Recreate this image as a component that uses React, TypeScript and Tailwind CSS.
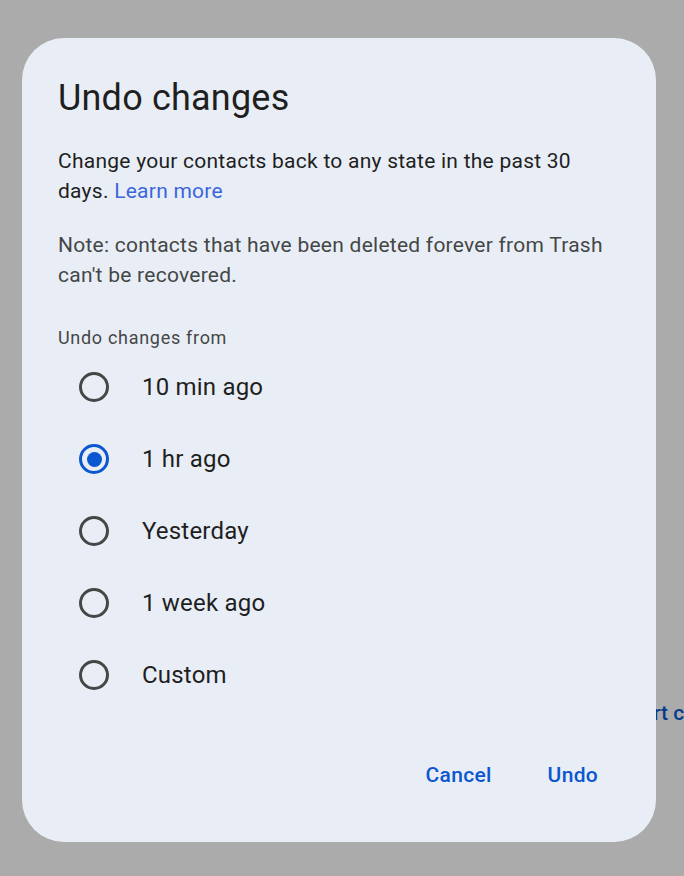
const options = ['10 min ago', '1 hr ago', 'Yesterday', '1 week ago', 'Custom'];

function Radio({ checked }: { checked: boolean }) {
  return (
    <span
      className={
        checked
          ? 'flex h-[30px] w-[30px] shrink-0 items-center justify-center rounded-full border-[3px] border-[#0b57d0]'
          : 'flex h-[30px] w-[30px] shrink-0 items-center justify-center rounded-full border-[3px] border-[#444746]'
      }
    >
      {checked && <span className="h-[15px] w-[15px] rounded-full bg-[#0b57d0]" />}
    </span>
  );
}

export default function App() {
  const selected = '1 hr ago';

  return (
    <div className="relative h-[876px] w-[684px] overflow-hidden bg-[#ababab] font-['Roboto',sans-serif]">
      {/* page behind the scrim */}
      <span className="absolute left-[607px] top-[698px] whitespace-nowrap text-[21px] font-medium text-[#083a8b]">
        Export contacts
      </span>

      <div className="absolute left-[22px] top-[38px] flex h-[804px] w-[634px] flex-col rounded-[42px] bg-[#e9eef6] px-[36px] pt-[36px]">
        <h1 className="text-[36px] font-normal leading-[48px] tracking-[0.2px] text-[#1f1f1f]">Undo changes</h1>

        <p className="mt-[24px] text-[21px] leading-[30px] tracking-[0.25px] text-[#1f1f1f]">
          Change your contacts back to any state in the past 30 days.{' '}
          <a className="text-[#3b66dc]">Learn more</a>
        </p>

        <p className="mt-[24px] text-[21px] leading-[30px] tracking-[0.25px] text-[#444746]">
          Note: contacts that have been deleted forever from Trash can't be recovered.
        </p>

        <div className="mt-[34px] text-[18px] leading-[27px] tracking-[0.7px] text-[#444746]">
          Undo changes from
        </div>

        <div className="flex flex-col">
          {options.map((opt) => (
            <label key={opt} className="flex h-[72px] items-center gap-[33px] pl-[21px]">
              <Radio checked={opt === selected} />
              <span className="text-[24px] leading-[32px] tracking-[0.2px] text-[#1f1f1f]">{opt}</span>
            </label>
          ))}
        </div>

        <div className="mt-[35px] flex justify-end gap-[20px] pr-[4px]">
          <button className="h-[60px] px-[18px] text-[21px] font-medium tracking-[0.3px] text-[#0b57d0]">Cancel</button>
          <button className="h-[60px] px-[18px] text-[21px] font-medium tracking-[0.3px] text-[#0b57d0]">Undo</button>
        </div>
      </div>
    </div>
  );
}
